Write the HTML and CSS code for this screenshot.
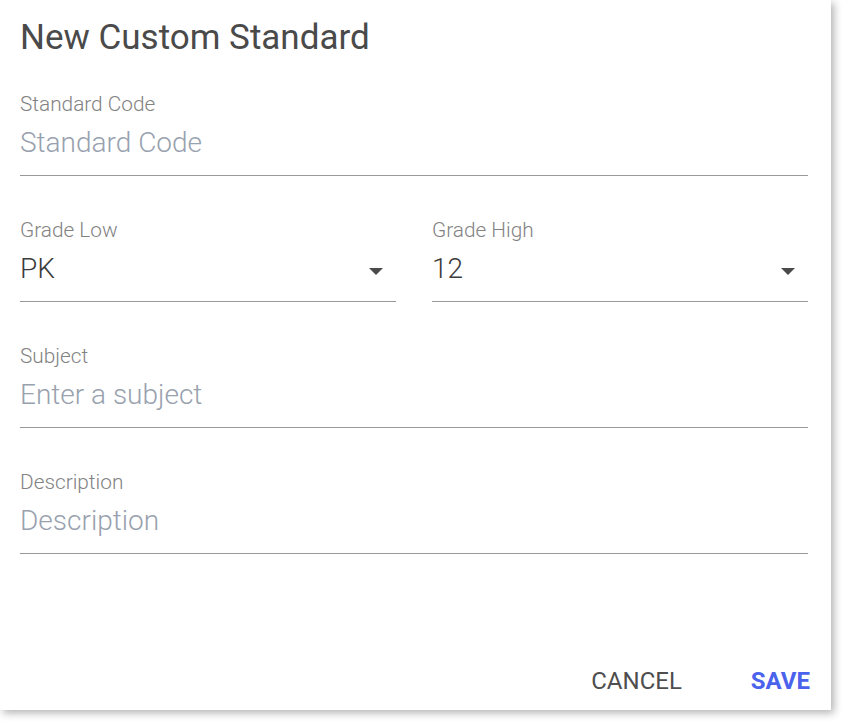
FILE: index.html
```html
<!DOCTYPE html>
<html>
<head>
<meta charset="utf-8">
<link rel="stylesheet" href="styles.css">
</head>
<body>
<div class="dialog">
  <h1 class="title">New Custom Standard</h1>
  <div class="fields">
    <div class="field">
      <div class="label">Standard Code</div>
      <div class="input placeholder">Standard Code</div>
    </div>
    <div class="row">
      <div class="field">
        <div class="label">Grade Low</div>
        <div class="input select"><span>PK</span><span class="caret"></span></div>
      </div>
      <div class="field">
        <div class="label">Grade High</div>
        <div class="input select"><span>12</span><span class="caret"></span></div>
      </div>
    </div>
    <div class="field">
      <div class="label">Subject</div>
      <div class="input placeholder">Enter a subject</div>
    </div>
    <div class="field">
      <div class="label">Description</div>
      <div class="input placeholder">Description</div>
    </div>
  </div>
  <div class="actions">
    <button class="btn cancel">CANCEL</button>
    <button class="btn save">SAVE</button>
  </div>
</div>
</body>
</html>
```
FILE: styles.css
```css
html, body {
  margin: 0;
  padding: 0;
  background: #fff;
}
body {
  font-family: Roboto, "Liberation Sans", sans-serif;
  width: 843px;
  height: 722px;
  overflow: hidden;
}
.dialog {
  box-sizing: border-box;
  width: 831px;
  height: 710px;
  background: #fff;
  box-shadow: 3px 3px 8px rgba(0, 0, 0, 0.3);
  padding: 0 23px 0 20px;
  display: flex;
  flex-direction: column;
}
.title {
  margin: 0;
  padding-top: 18px;
  font-size: 35px;
  line-height: 40px;
  font-weight: 400;
  color: #4a4a4a;
}
.fields {
  display: flex;
  flex-direction: column;
  gap: 42px;
  margin-top: 34px;
}
.row {
  display: flex;
  gap: 36px;
}
.row .field {
  flex: 1;
}
.field {
  display: flex;
  flex-direction: column;
  border-bottom: 1px solid #999;
}
.label {
  font-size: 20.8px;
  font-weight: 300;
  line-height: 24px;
  color: #828282;
}
.input {
  font-size: 28px;
  font-weight: 300;
  line-height: 34px;
  padding: 10px 0 15px;
  color: #3c3c3c;
}
.placeholder {
  color: #98a1ae;
}
.select {
  display: flex;
  justify-content: space-between;
  align-items: center;
}
.caret {
  width: 0;
  height: 0;
  border-left: 7px solid transparent;
  border-right: 7px solid transparent;
  border-top: 7px solid #4a4a4a;
  margin-right: 13px;
  margin-top: 4px;
}
.actions {
  margin-top: auto;
  display: flex;
  justify-content: flex-end;
  gap: 69px;
  padding-bottom: 15px;
  margin-right: -2px;
}
.btn {
  border: 0;
  background: none;
  padding: 0;
  font-family: Roboto, "Liberation Sans", sans-serif;
  font-size: 24px;
  line-height: 28px;
}
.cancel {
  color: #4e4e4e;
}
.save {
  color: #4b63ec;
  font-weight: 700;
}
```
